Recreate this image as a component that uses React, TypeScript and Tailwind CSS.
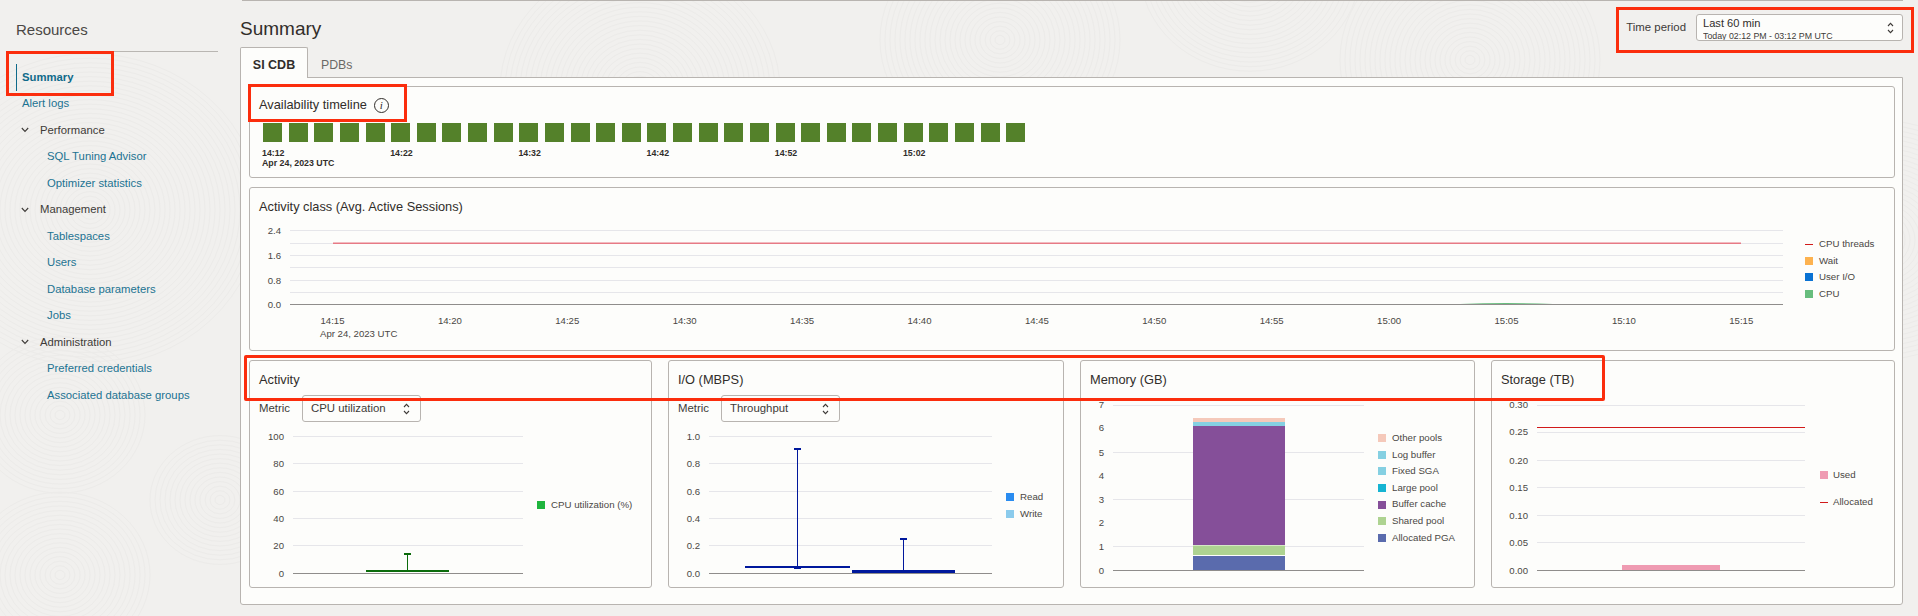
const sidebarItems = [
  { label: 'Summary', kind: 'active' },
  { label: 'Alert logs', kind: 'link' },
  { label: 'Performance', kind: 'group' },
  { label: 'SQL Tuning Advisor', kind: 'child' },
  { label: 'Optimizer statistics', kind: 'child' },
  { label: 'Management', kind: 'group' },
  { label: 'Tablespaces', kind: 'child' },
  { label: 'Users', kind: 'child' },
  { label: 'Database parameters', kind: 'child' },
  { label: 'Jobs', kind: 'child' },
  { label: 'Administration', kind: 'group' },
  { label: 'Preferred credentials', kind: 'child' },
  { label: 'Associated database groups', kind: 'child' },
];

const swirls = [
  { cx: 1470, cy: 60, max: 130 },
  { cx: 1250, cy: -30, max: 110 },
  { cx: 640, cy: 90, max: 140 },
  { cx: 1000, cy: 40, max: 120 },
  { cx: 90, cy: 210, max: 170 },
  { cx: 60, cy: 575, max: 90 },
  { cx: 60, cy: 415, max: 85 },
  { cx: 220, cy: 500, max: 70 },
  { cx: 1880, cy: 240, max: 130 },
];

function Background() {
  return (
    <svg className="absolute inset-0" width="1918" height="616" fill="none" stroke="#ecebe9" strokeWidth="1">
      {swirls.map((s) =>
        Array.from({ length: Math.floor(s.max / 5) }, (_, i) => (
          <ellipse key={`${s.cx}-${i}`} cx={s.cx} cy={s.cy} rx={(i + 1) * 5} ry={(i + 1) * 4.6} />
        )),
      )}
    </svg>
  );
}

function Sidebar() {
  return (
    <aside className="relative w-[240px] shrink-0 pl-4 pr-[22px]">
      <div className="h-[52px] border-b border-[#b9b6b2] pt-[20px] text-[15px] leading-5 text-[#4a4744]">Resources</div>
      <nav className="mt-[12px] text-[11.3px]">
        {sidebarItems.map((item) => (
          <div key={item.label} className="flex h-[26.5px] items-center">
            {item.kind === 'active' && (
              <span className="flex h-[27px] items-center border-l border-[#0f6a8a] pl-[5px] font-bold text-[#0f6a8a]">
                {item.label}
              </span>
            )}
            {item.kind === 'link' && <span className="pl-[6px] text-[#1c7392]">{item.label}</span>}
            {item.kind === 'group' && (
              <span className="flex items-center pl-[5px] text-[#3e3b38]">
                <svg width="8" height="6" viewBox="0 0 8 6" fill="none" stroke="#3e3b38" strokeWidth="1.1" className="mr-[11px]">
                  <path d="M0.8 1 L4 4.4 L7.2 1" />
                </svg>
                {item.label}
              </span>
            )}
            {item.kind === 'child' && <span className="pl-[31px] text-[#1c7392]">{item.label}</span>}
          </div>
        ))}
      </nav>
    </aside>
  );
}

function UpDown() {
  return (
    <svg width="7" height="12" viewBox="0 0 7 12" fill="none" stroke="#3e3b38" strokeWidth="1.1" className="shrink-0">
      <path d="M1 4 L3.5 1.4 L6 4" />
      <path d="M1 8 L3.5 10.6 L6 8" />
    </svg>
  );
}

function Card({ className, title, children }: { className: string; title: string; children?: React.ReactNode }) {
  return (
    <section className={`rounded-[3px] border border-[#b8b4b0] bg-[#fdfdfb] ${className}`}>
      <h2 className="flex h-[34px] items-center pl-[9px] pt-1 text-[12.8px] font-normal text-[#312d2a]">{title}</h2>
      {children}
    </section>
  );
}

function MetricSelect({ value }: { value: string }) {
  return (
    <div className="flex h-[27px] items-center pl-[9px] text-[11.4px] text-[#3e3b38]">
      <span className="w-[43px]">Metric</span>
      <div className="flex h-[27px] w-[119px] items-center justify-between rounded-[3px] border border-[#b8b4b0] pl-2 pr-[10px]">
        {value}
        <UpDown />
      </div>
    </div>
  );
}

function Legend({ items, className }: { items: { label: string; color: string; line?: boolean }[]; className: string }) {
  return (
    <div className={`flex flex-col text-[9.7px] text-[#4a4744] ${className}`}>
      {items.map((item) => (
        <div key={item.label} className="flex h-[16.6px] items-center gap-[6px] whitespace-nowrap">
          {item.line ? (
            <span className="h-px w-2" style={{ backgroundColor: item.color }} />
          ) : (
            <span className="h-2 w-2" style={{ backgroundColor: item.color }} />
          )}
          {item.label}
        </div>
      ))}
    </div>
  );
}

function Grid({ x1, x2, ys, base }: { x1: number; x2: number; ys: number[]; base: number }) {
  return (
    <g>
      {ys.map((y) => (
        <line key={y} x1={x1} x2={x2} y1={y + 0.5} y2={y + 0.5} stroke="#e6e6ea" />
      ))}
      <line x1={x1} x2={x2} y1={base + 0.5} y2={base + 0.5} stroke="#8f8d8b" />
    </g>
  );
}

function YLabels({ x, labels }: { x: number; labels: [string, number][] }) {
  return (
    <g fontSize="9.6" fill="#4a4744" textAnchor="end">
      {labels.map(([text, y]) => (
        <text key={text} x={x} y={y + 3.5}>
          {text}
        </text>
      ))}
    </g>
  );
}

const classTimes = ['14:15', '14:20', '14:25', '14:30', '14:35', '14:40', '14:45', '14:50', '14:55', '15:00', '15:05', '15:10', '15:15'];

function ActivityClassChart() {
  return (
    <svg width="1540" height="128" viewBox="250 222 1540 128" className="block shrink-0">
      <Grid x1={290} x2={1783} ys={[230, 243, 255, 267, 280, 292]} base={304} />
      <YLabels x={281} labels={[['2.4', 230], ['1.6', 255], ['0.8', 280], ['0.0', 304]]} />
      <line x1={333} x2={1741} y1={243.2} y2={243.2} stroke="#e77a85" strokeWidth="1.5" />
      <path d="M1460 304 Q1506 302 1553 304 Z" fill="#67bd7d" />
      <g fontSize="9.6" fill="#4a4744" textAnchor="middle">
        {classTimes.map((t, i) => (
          <text key={t} x={332.5 + i * 117.4} y={323.5}>
            {t}
          </text>
        ))}
      </g>
      <text x={320} y={336.5} fontSize="9.6" fill="#4a4744">
        Apr 24, 2023 UTC
      </text>
    </svg>
  );
}

function CpuChart() {
  return (
    <svg width="280" height="159" viewBox="250 428 280 159" className="block shrink-0">
      <Grid x1={293} x2={523} ys={[436, 463, 491, 518, 545]} base={573} />
      <YLabels x={284} labels={[['100', 436], ['80', 463], ['60', 491], ['40', 518], ['20', 545], ['0', 573]]} />
      <g fill="#0b6b0b">
        <rect x={366} y={570} width={83} height={2} />
        <rect x={407} y={554} width={1} height={16} />
        <rect x={404} y={553} width={7} height={2} />
      </g>
    </svg>
  );
}

function IoChart() {
  return (
    <svg width="330" height="159" viewBox="669 428 330 159" className="block shrink-0">
      <Grid x1={709} x2={992} ys={[436, 463, 491, 518, 545]} base={573} />
      <YLabels x={700} labels={[['1.0', 436], ['0.8', 463], ['0.6', 491], ['0.4', 518], ['0.2', 545], ['0.0', 573]]} />
      <g fill="#00189c">
        <rect x={745} y={566} width={105} height={2} />
        <rect x={797} y={449} width={1} height={119} />
        <rect x={794} y={448} width={7} height={2} />
        <rect x={794} y={567} width={7} height={2} />
        <rect x={852} y={570} width={103} height={3} />
        <rect x={903} y={539} width={1} height={32} />
        <rect x={900} y={538} width={7} height={2} />
      </g>
    </svg>
  );
}

function MemoryChart() {
  return (
    <svg width="290" height="189" viewBox="1081 398 290 189" className="block shrink-0">
      <Grid x1={1113} x2={1364} ys={[405, 452, 499, 546]} base={570} />
      <YLabels
        x={1104}
        labels={[['7', 404], ['6', 427], ['5', 452], ['4', 475], ['3', 499], ['2', 522], ['1', 546], ['0', 570]]}
      />
      <rect x={1193} y={418} width={92} height={4} fill="#f5c9ba" />
      <rect x={1193} y={422} width={92} height={4} fill="#85d0e2" />
      <rect x={1193} y={426} width={92} height={119} fill="#854f99" />
      <rect x={1193} y={545.5} width={92} height={9.5} fill="#aed391" />
      <rect x={1193} y={556} width={92} height={14} fill="#5a6bad" />
    </svg>
  );
}

function StorageChart() {
  return (
    <svg width="320" height="189" viewBox="1492 398 320 189" className="block shrink-0">
      <Grid x1={1537} x2={1805} ys={[405, 432, 460, 487, 515, 542]} base={570} />
      <YLabels
        x={1528}
        labels={[['0.30', 404], ['0.25', 431], ['0.20', 460], ['0.15', 487], ['0.10', 515], ['0.05', 542], ['0.00', 570]]}
      />
      <rect x={1622} y={565} width={98} height={5} fill="#ef9bb2" />
      <line x1={1537} x2={1805} y1={427.5} y2={427.5} stroke="#d11a1a" />
    </svg>
  );
}

function Availability() {
  return (
    <section className="h-[92px] rounded-[3px] border border-[#b8b4b0] bg-[#fdfdfb]">
      <h2 className="flex h-[36px] items-center gap-[7px] pl-[9px] text-[12.8px] font-normal text-[#312d2a]">
        Availability timeline
        <span className="flex h-[15px] w-[15px] items-center justify-center rounded-full border border-[#312d2a] font-['Liberation_Serif',serif] text-[11px] italic leading-none">
          i
        </span>
      </h2>
      <div className="flex gap-[6.63px] pl-[13px]">
        {Array.from({ length: 30 }, (_, i) => (
          <span key={i} className="h-[19px] w-[19px] bg-[#54812a]" />
        ))}
      </div>
      <div className="mt-[6px] flex pl-[12px] text-[8.8px] font-bold leading-[10px] text-[#312d2a]">
        {['14:12', '14:22', '14:32', '14:42', '14:52', '15:02'].map((t) => (
          <span key={t} className="w-[128.2px]">
            {t}
          </span>
        ))}
      </div>
      <div className="pl-[12px] text-[8.8px] font-bold leading-[10px] text-[#312d2a]">Apr 24, 2023 UTC</div>
    </section>
  );
}

export default function App() {
  return (
    <div className="relative flex h-[616px] w-[1918px] overflow-hidden bg-[#f1f0ee] font-['Liberation_Sans',sans-serif]">
      <Background />
      <Sidebar />
      <main className="relative w-[1663px] shrink-0">
        <div className="ml-[2px] h-px bg-[#b8b4b0]" />
        <div className="flex h-[46px] items-center justify-between">
          <h1 className="pt-[10px] text-[19px] font-normal text-[#312d2a]">Summary</h1>
          <div className="flex items-center gap-[10px] pt-[7px] text-[11.4px] text-[#3e3b38]">
            <span>Time period</span>
            <div className="flex h-[27px] w-[207px] items-center justify-between overflow-hidden rounded-[3px] border border-[#b8b4b0] bg-[#fdfdfb] pl-[6px] pr-2">
              <div className="h-[24px] overflow-hidden">
                <div className="text-[11.1px] leading-[14px] text-[#312d2a]">Last 60 min</div>
                <div className="text-[8.8px] leading-[12px] text-[#3e3b38]">Today 02:12 PM - 03:12 PM UTC</div>
              </div>
              <UpDown />
            </div>
          </div>
        </div>
        <div className="flex h-[30px] items-end">
          <div className="relative z-10 -mb-px flex h-[31px] w-[68px] items-center justify-center rounded-t-[2px] border border-b-0 border-[#b8b4b0] bg-[#fdfdfb] pt-[5px] text-[12.5px] font-semibold text-[#312d2a]">
            SI CDB
          </div>
          <div className="flex h-[30px] items-center pl-[13px] pt-[7px] text-[12.3px] text-[#6b6966]">PDBs</div>
        </div>
        <div className="flex h-[528px] flex-col gap-[9px] rounded-b-[3px] border border-[#b8b4b0] bg-[#fdfdfb] pb-[16px] pl-2 pr-[7px] pt-2">
          <Availability />
          <Card className="h-[164px]" title="Activity class (Avg. Active Sessions)">
            <div className="flex">
              <ActivityClassChart />
              <Legend
                className="ml-[15px] mt-[14px]"
                items={[
                  { label: 'CPU threads', color: '#d11a1a', line: true },
                  { label: 'Wait', color: '#fdb24f' },
                  { label: 'User I/O', color: '#0a72d3' },
                  { label: 'CPU', color: '#67bd7d' },
                ]}
              />
            </div>
          </Card>
          <div className="flex gap-4">
            <Card className="h-[228px] w-[403px]" title="Activity">
              <MetricSelect value="CPU utilization" />
              <div className="mt-[6px] flex">
                <CpuChart />
                <Legend className="ml-[7px] mt-[69px]" items={[{ label: 'CPU utilization (%)', color: '#1fb53e' }]} />
              </div>
            </Card>
            <Card className="h-[228px] w-[396px]" title="I/O (MBPS)">
              <MetricSelect value="Throughput" />
              <div className="mt-[6px] flex">
                <IoChart />
                <Legend
                  className="ml-[7px] mt-[61px]"
                  items={[
                    { label: 'Read', color: '#2a8cf0' },
                    { label: 'Write', color: '#8bcbec' },
                  ]}
                />
              </div>
            </Card>
            <Card className="h-[228px] w-[395px]" title="Memory (GB)">
              <div className="mt-[3px] flex">
                <MemoryChart />
                <Legend
                  className="ml-[7px] mt-[32px]"
                  items={[
                    { label: 'Other pools', color: '#f5c9ba' },
                    { label: 'Log buffer', color: '#85d0e2' },
                    { label: 'Fixed SGA', color: '#85d0e2' },
                    { label: 'Large pool', color: '#16b4d2' },
                    { label: 'Buffer cache', color: '#854f99' },
                    { label: 'Shared pool', color: '#aed391' },
                    { label: 'Allocated PGA', color: '#5a6bad' },
                  ]}
                />
              </div>
            </Card>
            <Card className="h-[228px] w-[404px]" title="Storage (TB)">
              <div className="mt-[3px] flex">
                <StorageChart />
                <div className="ml-2 mt-[69px] flex flex-col gap-[10.4px] text-[9.7px] text-[#4a4744]">
                  <div className="flex h-[16.6px] items-center gap-[5px]">
                    <span className="h-2 w-2 bg-[#ef9bb2]" />
                    Used
                  </div>
                  <div className="flex h-[16.6px] items-center gap-[5px]">
                    <span className="h-px w-2 bg-[#d11a1a]" />
                    Allocated
                  </div>
                </div>
              </div>
            </Card>
          </div>
        </div>
      </main>
      {/* red callouts drawn on top of the screenshot */}
      <div className="absolute left-[6px] top-[51px] h-[45px] w-[108px] border-[3px] border-[#fb2d0d]" />
      <div className="absolute left-[248px] top-[84px] h-[38px] w-[159px] border-[3px] border-[#fb2d0d]" />
      <div className="absolute left-[244px] top-[355px] h-[46px] w-[1361px] rounded-[2px] border-[3px] border-[#fb2d0d]" />
      <div className="absolute left-[1616px] top-[7px] h-[46px] w-[298px] border-[3px] border-[#fb2d0d]" />
    </div>
  );
}
